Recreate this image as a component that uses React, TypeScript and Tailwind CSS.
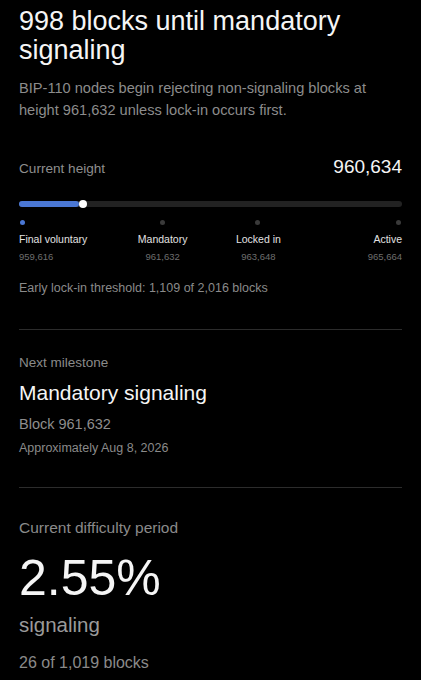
import React from "react";

const milestones = [
  { label: "Final voluntary", value: "959,616", active: true, align: "items-start text-left" },
  { label: "Mandatory", value: "961,632", active: false, align: "items-center text-center" },
  { label: "Locked in", value: "963,648", active: false, align: "items-center text-center" },
  { label: "Active", value: "965,664", active: false, align: "items-end text-right" },
];

export default function App() {
  return (
    <div
      className="min-h-[680px] w-full bg-black px-[19px] pt-[7px] pb-4 text-[#f5f5f5]"
      style={{ fontFamily: '"Liberation Sans", Arial, Helvetica, sans-serif' }}
    >
      <h1 className="text-[27px] leading-[29px] font-normal text-[#f5f5f5]">
        998 blocks until mandatory signaling
      </h1>
      <p className="mt-[12px] text-[14.6px] leading-[22px] text-[#8c8c8c]">
        BIP-110 nodes begin rejecting non-signaling blocks at height 961,632 unless lock-in occurs first.
      </p>

      <div className="mt-[34px] flex items-baseline justify-between">
        <span className="text-[13.6px] leading-[24px] text-[#8e8e8e]">Current height</span>
        <span className="text-[19px] leading-[24px] text-[#f5f5f5]">960,634</span>
      </div>

      <div className="relative mt-[20px] h-[6px] rounded-full bg-[#222222]">
        <div className="absolute left-0 top-0 h-[6px] w-[60px] rounded-full bg-[#4a77d4]" />
        <div className="absolute left-[60px] top-[-1px] h-[8px] w-[8px] rounded-full bg-white" />
      </div>

      <div className="mt-[13px] grid grid-cols-4">
        {milestones.map((m) => (
          <div key={m.label} className={`flex flex-col ${m.align}`}>
            <div
              className={`h-[5px] w-[5px] rounded-full ${m.active ? "bg-[#4a77d4] ml-[1px]" : "bg-[#3a3a3a] mr-[1px]"}`}
            />
            <div className="mt-[7px] text-[10.5px] leading-[14px] text-[#e2e2e2]">{m.label}</div>
            <div className="mt-[4px] text-[9.5px] leading-[13px] text-[#6e6e6e]">{m.value}</div>
          </div>
        ))}
      </div>

      <p className="mt-[16px] text-[12.5px] leading-[18px] text-[#8a8a8a]">
        Early lock-in threshold: 1,109 of 2,016 blocks
      </p>

      <div className="mt-[32px] h-px bg-[#2c2c2c]" />

      <div className="mt-[24px] text-[13.5px] leading-[18px] text-[#8a8a8a]">Next milestone</div>
      <div className="mt-[8px] text-[21px] leading-[26px] text-[#f5f5f5]">Mandatory signaling</div>
      <div className="mt-[8px] text-[14.5px] leading-[20px] text-[#8e8e8e]">Block 961,632</div>
      <div className="mt-[5px] text-[12.5px] leading-[18px] text-[#8a8a8a]">Approximately Aug 8, 2026</div>

      <div className="mt-[30px] h-px bg-[#2c2c2c]" />

      <div className="mt-[30px] text-[15.5px] leading-[20px] text-[#8a8a8a]">Current difficulty period</div>
      <div className="mt-[12px] text-[50px] leading-[56px] text-[#f5f5f5]">2.55%</div>
      <div className="mt-[6px] text-[20.5px] leading-[26px] text-[#9a9a9a]">signaling</div>
      <div className="mt-[15px] text-[16px] leading-[20px] text-[#8a8a8a]">26 of 1,019 blocks</div>
    </div>
  );
}
